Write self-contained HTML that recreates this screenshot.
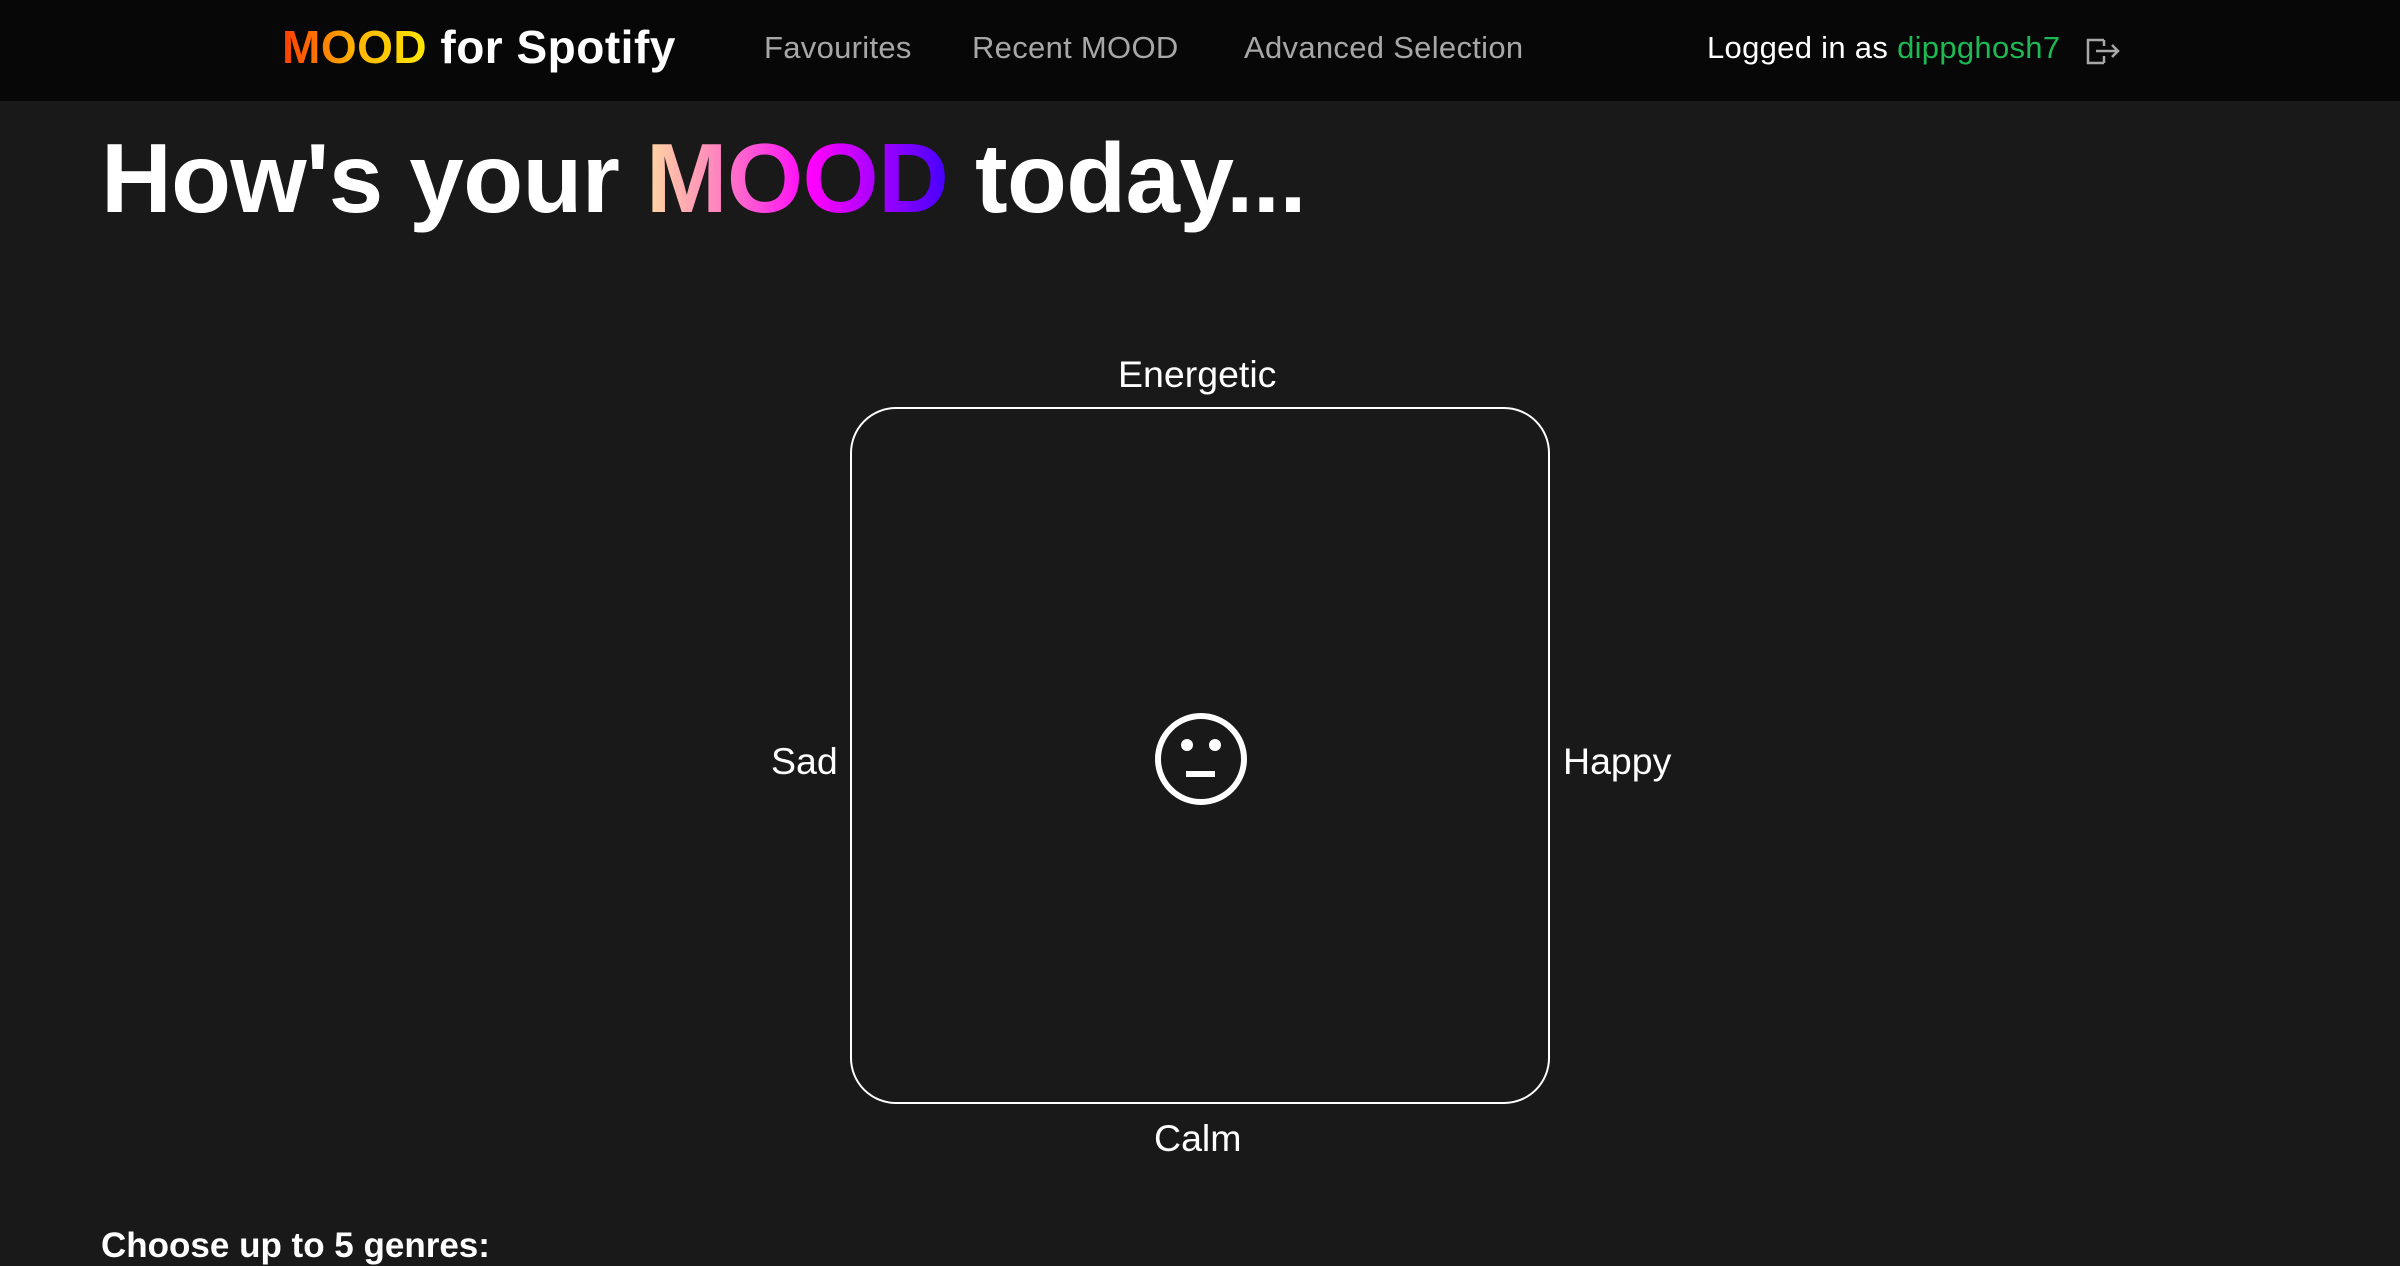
<!DOCTYPE html>
<html><head><meta charset="utf-8"><style>
*{margin:0;padding:0;box-sizing:border-box}
body{width:2400px;height:1260px;overflow:hidden;background:#191919;font-family:"Liberation Sans",sans-serif;color:#fff;position:relative}
.nav{position:absolute;left:0;top:0;width:2400px;height:101px;background:#070707}
.abs{position:absolute;white-space:nowrap}
.logo{left:282px;top:20px;font-size:46px;font-weight:bold;letter-spacing:0.5px}
.grad1{background:linear-gradient(90deg,#ff3b00,#ffb300 50%,#ffe800);-webkit-background-clip:text;color:transparent}
.link{top:30px;font-size:31px;color:#a7a7a7;letter-spacing:0.3px}
h1{position:absolute;left:101px;top:122px;font-size:98px;font-weight:bold;letter-spacing:-0.6px;white-space:nowrap}
.grad2{background:linear-gradient(90deg,#ffd9a0,#ff80c0 25%,#ff00ff 55%,#4400ff);-webkit-background-clip:text;color:transparent}
.box{position:absolute;left:850px;top:407px;width:700px;height:697px;border:2px solid #fff;border-radius:46px}
.lbl{font-size:37.5px;position:absolute;white-space:nowrap}
</style></head><body>
<div class="nav"></div>
<div class="abs logo"><span class="grad1">MOOD</span> for Spotify</div>
<div class="abs link" style="left:764px">Favourites</div>
<div class="abs link" style="left:972px">Recent MOOD</div>
<div class="abs link" style="left:1244px">Advanced Selection</div>
<div class="abs link" style="left:1707px;color:#fff">Logged in as <span style="color:#1db954">dippghosh7</span></div>
<svg class="abs" style="left:2084px;top:36px" width="38" height="30" viewBox="0 0 38 30" fill="none" stroke="#a7a7a7" stroke-width="2.5"><path d="M20 4H4v23h16M20 20v7M20 4v6M12 15h22M28 9l6 6-6 6"/></svg>
<h1>How's your <span class="grad2">MOOD</span> today...</h1>
<div class="lbl" style="left:1118px;top:353px">Energetic</div>
<div class="box"></div>
<div class="lbl" style="left:771px;top:740px">Sad</div>
<div class="lbl" style="left:1563px;top:740px">Happy</div>
<div class="lbl" style="left:1154px;top:1117px">Calm</div>
<svg class="abs" style="left:1152px;top:710px" width="98" height="98" viewBox="0 0 98 98"><circle cx="49" cy="49" r="43" fill="none" stroke="#fff" stroke-width="6"/><circle cx="35" cy="35" r="6" fill="#fff"/><circle cx="63" cy="35" r="6" fill="#fff"/><rect x="34" y="61" width="29" height="6" fill="#fff"/></svg>
<div class="abs" style="left:101px;top:1226px;font-size:35px;font-weight:bold;letter-spacing:0px">Choose up to 5 genres:</div>
</body></html>
